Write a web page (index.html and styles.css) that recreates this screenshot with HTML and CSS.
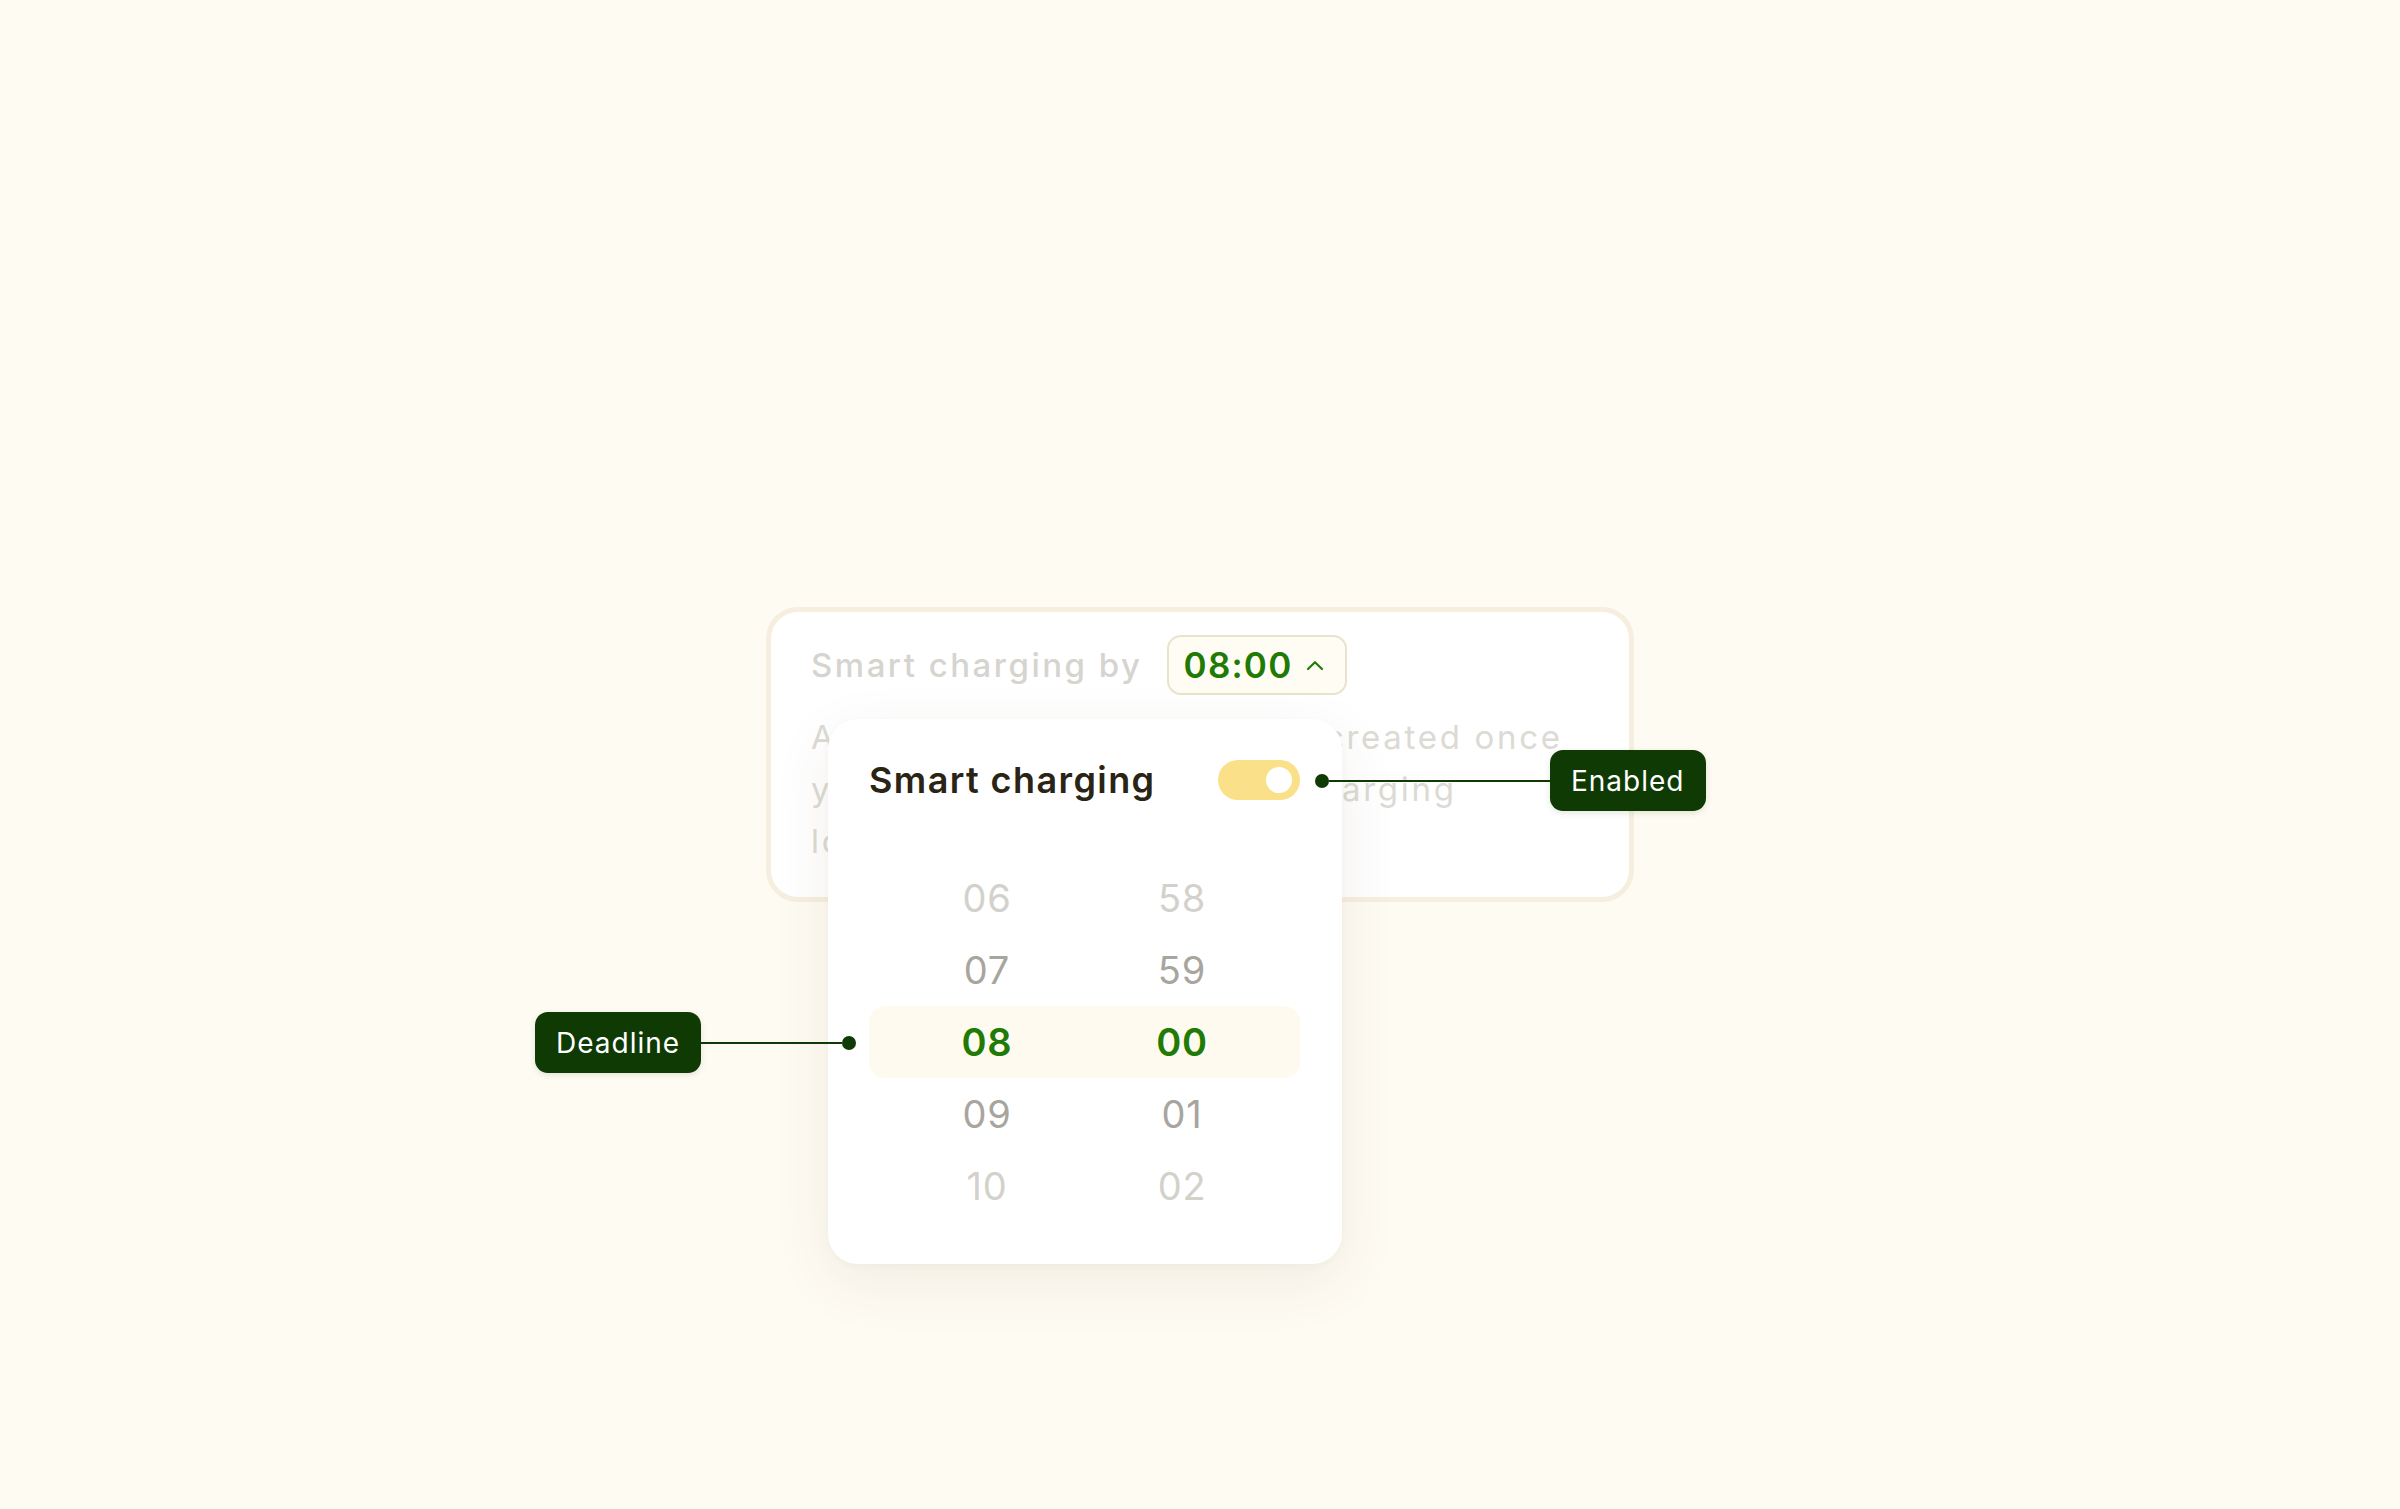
FILE: index.html
```html
<!DOCTYPE html>
<html lang="en">
<head>
<meta charset="utf-8">
<title>Smart charging</title>
<link rel="stylesheet" href="styles.css">
</head>
<body>
<main class="stage">
  <section class="card">
    <div class="card-head">
      <h2 class="card-title">Smart charging by</h2>
      <button class="time-btn" type="button">
        <span class="time-value">08:00</span>
        <svg class="chev" viewBox="0 0 18 11" width="18" height="11" aria-hidden="true"><path d="M2 9 L9 2.2 L16 9" fill="none" stroke="#1f7b06" stroke-width="2.2" stroke-linecap="round" stroke-linejoin="round"/></svg>
      </button>
    </div>
    <p class="card-desc">
      <span class="line">A charging schedule will be created once</span>
      <span class="line">you plug in to begin smart charging</span>
      <span class="line">lowest prices.</span>
    </p>
  </section>

  <section class="popup">
    <div class="popup-head">
      <h3 class="popup-title">Smart charging</h3>
      <span class="toggle"><span class="knob"></span></span>
    </div>
    <div class="picker">
      <div class="row faint"><span class="cell">06</span><span class="cell">58</span></div>
      <div class="row mid"><span class="cell">07</span><span class="cell">59</span></div>
      <div class="row selected"><span class="cell">08</span><span class="cell">00</span></div>
      <div class="row mid"><span class="cell">09</span><span class="cell">01</span></div>
      <div class="row faint"><span class="cell">10</span><span class="cell">02</span></div>
    </div>
  </section>

  <div class="callout callout-enabled">
    <span class="dot"></span><span class="wire wire-enabled"></span><span class="pill">Enabled</span>
  </div>
  <div class="callout callout-deadline">
    <span class="pill">Deadline</span><span class="wire wire-deadline"></span><span class="dot"></span>
  </div>
</main>
</body>
</html>
```
FILE: styles.css
```css
* { box-sizing: border-box; }

html, body {
  margin: 0;
  height: 100%;
}

body {
  background: #fefbf3;
  font-family: Inter, "Noto Sans", "Liberation Sans", sans-serif;
  display: flex;
  align-items: center;
  justify-content: center;
}

.stage {
  position: relative;
  width: 868px;
}

/* background card */
.card {
  width: 868px;
  border: 5px solid #f6efdf;
  border-radius: 32px;
  background: #ffffff;
  padding: 23px 40px 30px 40px;
}

.card-head {
  display: flex;
  align-items: center;
  gap: 24px;
  height: 60px;
}

.card-title {
  margin: 0;
  font-size: 33px;
  font-weight: 500;
  color: #d6d4cf;
  letter-spacing: 2.5px;
}

.time-btn {
  display: flex;
  align-items: center;
  gap: 14px;
  height: 60px;
  padding: 0 21px 0 15px;
  border: 2px solid #e8e3cd;
  border-radius: 14px;
  background: #fffcf3;
  font-family: inherit;
}

.time-value {
  font-size: 35px;
  font-weight: 600;
  color: #1f7b06;
  letter-spacing: 1.2px;
}

.chev { display: block; }

.card-desc {
  margin: 16px 0 0 0;
  font-size: 33px;
  line-height: 52px;
  color: #dcdad4;
  letter-spacing: 2.7px;
}

.card-desc .line {
  display: block;
  white-space: nowrap;
}

/* popup */
.popup {
  position: absolute;
  left: 62px;
  top: 112px;
  width: 514px;
  background: #ffffff;
  border-radius: 30px;
  padding: 41px 42px 42px 41px;
  box-shadow: 0 18px 60px rgba(90, 70, 20, 0.08), 0 2px 8px rgba(90, 70, 20, 0.03);
}

.popup-head {
  display: flex;
  align-items: center;
  justify-content: space-between;
  height: 40px;
}

.popup-title {
  margin: 0;
  font-size: 36px;
  font-weight: 600;
  color: #2a2415;
  letter-spacing: 1.4px;
}

.toggle {
  position: relative;
  display: block;
  width: 82px;
  height: 40px;
  border-radius: 20px;
  background: #fbe08a;
}

.knob {
  position: absolute;
  right: 8px;
  top: 7px;
  width: 26px;
  height: 26px;
  border-radius: 50%;
  background: #ffffff;
}

.picker {
  margin-top: 62px;
  display: flex;
  flex-direction: column;
}

.row {
  display: flex;
  justify-content: center;
  align-items: center;
  height: 72px;
  border-radius: 16px;
  font-size: 38px;
  font-weight: 400;
  letter-spacing: 0.8px;
}

.cell {
  width: 195px;
  text-align: center;
}

.row.faint { color: #d3d1cb; }
.row.mid { color: #a8a59e; }
.row.selected {
  background: #fffaef;
  color: #1f7b06;
  font-weight: 600;
}

/* callouts */
.callout {
  position: absolute;
  display: flex;
  align-items: center;
}

.callout-enabled { left: 549px; top: 143px; }
.callout-deadline { left: -231px; top: 405px; }

.dot {
  width: 14px;
  height: 14px;
  border-radius: 50%;
  background: #0f3a03;
  flex: none;
}

.wire {
  height: 2px;
  background: #0f3a03;
  flex: none;
}
.wire-enabled { width: 221px; }
.wire-deadline { width: 141px; }

.pill {
  display: flex;
  align-items: center;
  height: 61px;
  padding: 0 21px;
  border-radius: 13px;
  background: #0f3a03;
  color: #ffffff;
  font-size: 28px;
  font-weight: 400;
  letter-spacing: 1px;
  box-shadow: 0 2px 6px rgba(15, 58, 3, 0.12);
}
```
